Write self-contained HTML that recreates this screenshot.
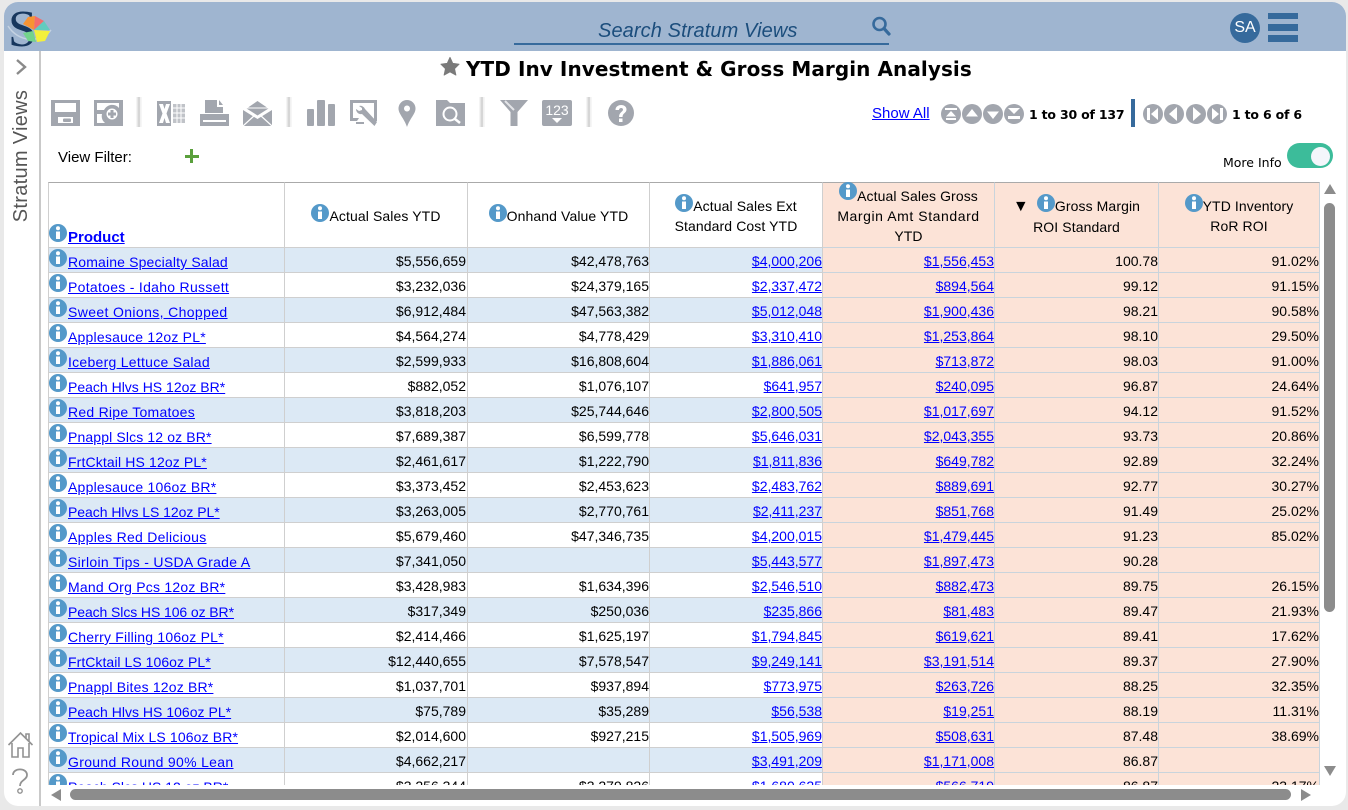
<!DOCTYPE html>
<html><head><meta charset="utf-8"><title>YTD Inv Investment &amp; Gross Margin Analysis</title>
<style>
*{box-sizing:border-box}
html,body{margin:0;padding:0;width:1348px;height:810px;overflow:hidden;background:#e9e9e9;font-family:"Liberation Sans",sans-serif;color:#000}
.abs,#wrap,#top,#side,#tw{position:absolute}
#wrap{left:4px;top:2px;width:1342px;height:804px;background:#fff;border-radius:14px;overflow:hidden}
#top{left:4px;top:2px;width:1342px;height:49px;background:#9fb5d0;border-radius:14px 14px 0 0}
#side{left:39px;top:51px;width:2px;height:755px;background:#c9c9c9}
a{color:#00f;text-decoration:underline}
#tw{left:48px;top:182px;width:1272px;height:603px;overflow:hidden}
table{border-collapse:separate;border-spacing:0;table-layout:fixed;width:1272px}
td{padding:0;height:25px;font-size:14px;line-height:24px;text-align:right;padding-right:1px;border-right:1px solid #cfcfcf;border-bottom:1px solid #cfcfcf;vertical-align:top;white-space:nowrap;position:relative}
td:nth-child(n+3){padding-right:0}
td span,td>a{position:relative;top:1px}
tr.b td{background:#dce9f5}
td:nth-child(n+5),tr.b td:nth-child(n+5){background:#fce3d7;border-right-color:#c9d4dc;border-bottom-color:#c9d4dc}
td:first-child{text-align:left;border-left:1px solid #cfcfcf;padding-left:19px;font-size:14px}
td:first-child a{top:2px}
td svg{position:absolute;left:0;top:1px;width:18px;height:18px}
th{padding:0;height:66px;font-weight:normal;font-size:14px;line-height:20px;text-align:center;border-top:1px solid #aaa;border-right:1px solid #cfcfcf;border-bottom:1px solid #cfcfcf;vertical-align:middle;position:relative;letter-spacing:.1px}
th:first-child{border-left:1px solid #cfcfcf;text-align:left;vertical-align:bottom}
th:nth-child(n+5){background:#fce3d7;border-right-color:#c9d4dc;border-bottom-color:#c9d4dc}
th svg{width:18px;height:18px;vertical-align:-1px}
th div{position:relative;top:0}
.tool svg{position:absolute;fill:#a2a6ae}
.sep{position:absolute;top:97px;width:6px;height:30px;background:linear-gradient(90deg,#f6f6f6 0,#f0f0f0 25%,#d6d6d6 30%,#d6d6d6 65%,#f0f0f0 70%,#f8f8f8 100%)}
.nav{position:absolute;top:104px;width:20px;height:20px}
.b13{position:absolute;font:bold 12.5px "DejaVu Sans",sans-serif;letter-spacing:-.2px;white-space:nowrap;top:107px}
</style></head><body>
<svg width="0" height="0" style="position:absolute"><defs>
<symbol id="i" viewBox="0 0 18 18"><circle cx="9" cy="9" r="9" fill="#5499c9"/><circle cx="9" cy="4.3" r="2" fill="#fff"/><rect x="7" y="7.5" width="4" height="7.5" fill="#fff"/></symbol>
</defs></svg>
<div id="wrap"></div>
<div id="top"></div>
<div id="side"></div>

<!-- logo -->
<svg class="abs" style="left:6px;top:4px" width="48" height="46" viewBox="0 0 48 46">
<text x="2" y="42" font-family="Liberation Serif" font-size="52" fill="#17375e">S</text>
<path d="M2 22C12 38 34 40 45 26" fill="none" stroke="#c4d2e2" stroke-width="1.500"/>
<path d="M28 26L17 20L22 13L29 12Z" fill="#f79433"/><path d="M28 26L29 12L38 17Z" fill="#f46c6c"/><path d="M28 26L38 17L44 26Z" fill="#62cbbf"/><path d="M28 26L44 27L39 37L31 38Z" fill="#f4f03c"/><path d="M27 27L30 38L22 37L17 29Z" fill="#73d38c"/>
</svg>

<!-- search -->
<div class="abs" style="left:598px;top:19px;font-size:20px;font-style:italic;color:#1b4d7c;white-space:nowrap;line-height:24px;letter-spacing:.1px">Search Stratum Views</div>
<div class="abs" style="left:514px;top:43px;width:375px;height:2px;background:#366a9c"></div>
<svg class="abs" style="left:871px;top:15px" width="20" height="22" viewBox="0 0 20 22"><circle cx="8.5" cy="9" r="6" fill="none" stroke="#366a9c" stroke-width="2.6"/><path d="M13 13.5L18 19" stroke="#366a9c" stroke-width="3.2" stroke-linecap="round"/></svg>
<div class="abs" style="left:1230px;top:13px;width:30px;height:30px;border-radius:50%;background:#366a9c;color:#fff;font-size:16px;text-align:center;line-height:30px">SA</div>
<div class="abs" style="left:1268px;top:13px;width:30px;height:6px;background:#366a9c"></div>
<div class="abs" style="left:1268px;top:24px;width:30px;height:7px;background:#366a9c"></div>
<div class="abs" style="left:1268px;top:35px;width:30px;height:7px;background:#366a9c"></div>

<!-- sidebar -->
<svg class="abs" style="left:14px;top:58px" width="14" height="18" viewBox="0 0 14 18"><path d="M3 2L11 9L3 16" fill="none" stroke="#8a8a8a" stroke-width="2.4"/></svg>
<div class="abs" style="left:21px;top:156px;transform:translate(-50%,-50%) rotate(-90deg);font-size:20px;color:#555;white-space:nowrap;line-height:24px;letter-spacing:.3px">Stratum Views</div>
<svg class="abs" style="left:7px;top:731px" width="27" height="28" viewBox="0 0 27 28"><path d="M1.5 14L13.5 2L25.500 14M5 12V26H11V17H16V26H22V12M19 7V3H22V10" fill="none" stroke="#929292" stroke-width="1.6"/></svg>
<svg class="abs" style="left:10px;top:768px" width="20" height="26" viewBox="0 0 20 26"><path d="M3 7C3 -0.500 17 -0.500 17 7C17 12 10 12 10 18" fill="none" stroke="#929292" stroke-width="1.800"/><circle cx="10" cy="23" r="2.200" fill="none" stroke="#929292" stroke-width="1.400"/></svg>

<!-- title -->
<svg class="abs" style="left:440px;top:56px" width="20" height="20" viewBox="0 0 22 21"><path d="M11 1L14 7.500L21 8.500L16 13.500L17.500 20.500L11 17L4.500 20.500L6 13.500L1 8.500L8 7.500Z" fill="#7a7a7a" stroke="#7a7a7a" stroke-linejoin="round"/></svg>
<div class="abs" style="left:466px;top:56px;font:bold 20px/26px 'DejaVu Sans',sans-serif;letter-spacing:.07px;white-space:nowrap">YTD Inv Investment &amp; Gross Margin Analysis</div>

<!-- toolbar -->
<div class="tool">
<svg style="left:51px;top:100px" width="29" height="26" viewBox="0 0 29 26"><path fill-rule="evenodd" d="M0 0H29V26H0ZM4 3V12H25V3ZM7 17V23H22V17Z"/><rect x="12" y="18.500" width="8" height="3.500" rx="1"/></svg>
<svg style="left:94px;top:100px" width="29" height="26" viewBox="0 0 29 26"><path fill-rule="evenodd" d="M0 0H29V26H0ZM3 3V10H10A9 9 0 0 1 25 8V3ZM3 14V23H11A9 9 0 0 1 8 14Z"/><circle cx="18" cy="14" r="6.500" fill="#fff" stroke="#a2a6ae" stroke-width="2"/><path d="M16.500 10H19.500V12.500H22V15.500H19.500V18H16.500V15.500H14V12.500H16.500Z"/></svg>
<div class="sep" style="left:136px"></div>
<svg style="left:157px;top:101px" width="28" height="25" viewBox="0 0 28 25"><path d="M0 0H14V25H0Z" fill="#a2a6ae"/><path d="M16 3H28V22H16Z" fill="#c0c3c8"/><path d="M2 3H6L7.500 8L9 3H13L9.500 12.500L13 22H9L7.500 17L6 22H2L5.500 12.500Z" fill="#fff"/><path d="M16 7H28M16 12H28M16 17H28M20 3V22M24 3V22" stroke="#fff" stroke-width="1"/></svg>
<svg style="left:200px;top:100px" width="29" height="26" viewBox="0 0 29 26"><path d="M5 0H17V7H23V13H5ZM19 0L23 5H19ZM0 14H29V26H0Z"/><rect x="3" y="20" width="23" height="2" fill="#fff"/></svg>
<svg style="left:243px;top:101px" width="29" height="25" viewBox="0 0 29 25"><path d="M14.500 0L24 6.500H5ZM0 9L14.500 18L29 9V25H0Z"/><path d="M3.500 7.500H25.500L14.500 14.500Z"/><path d="M0 25L12 14M29 25L17 14" stroke="#fff" stroke-width="1.200"/><path d="M2 8L14.500 16L27 8" stroke="#fff" stroke-width="1.500" fill="none"/></svg>
<div class="sep" style="left:286px"></div>
<svg style="left:307px;top:100px" width="28" height="26" viewBox="0 0 28 26"><rect x="0" y="9" width="7" height="17" rx="1"/><rect x="10" y="0" width="8" height="26" rx="1"/><rect x="21" y="4" width="7" height="22" rx="1"/></svg>
<svg style="left:350px;top:100px" width="28" height="27" viewBox="0 0 28 27"><path fill-rule="evenodd" d="M0 0H27V21H21L19 19H24V3H3V18H9L7 21H0Z"/><path d="M9 6A5 5 0 0 1 15 9L27 22L24.500 26L12 14A5 5 0 0 1 6 9L9 11L12 10L12 8Z"/><path d="M6 22H14V24H6Z"/></svg>
<svg style="left:398px;top:100px" width="18" height="27" viewBox="0 0 18 27"><path fill-rule="evenodd" d="M9 0A8.500 8.500 0 0 1 17.500 8.500C17.500 14 12 18 9 27C6 18 .5 14 .5 8.500A8.500 8.500 0 0 1 9 0ZM9 5.500A3 3 0 1 0 9.010 5.500Z"/></svg>
<svg style="left:436px;top:100px" width="29" height="26" viewBox="0 0 29 26"><path d="M0 0H11L14 3H29V26H0Z"/><circle cx="14" cy="14" r="6.500" fill="none" stroke="#fff" stroke-width="2"/><path d="M19 19L24 23" stroke="#fff" stroke-width="2.500"/></svg>
<div class="sep" style="left:479px"></div>
<svg style="left:500px;top:100px" width="28" height="26" viewBox="0 0 28 26"><path d="M0 0H28L17.500 12V26H10.500V12Z"/><path d="M5 1L14 10" stroke="#e4e5e8" stroke-width="2"/></svg>
<svg style="left:542px;top:100px" width="30" height="26" viewBox="0 0 30 26"><rect width="30" height="26" rx="2"/><text x="15" y="15" text-anchor="middle" font-family="Liberation Sans" font-size="14" fill="#fff">123</text><path d="M10 18H20L15 23Z" fill="#fff"/></svg>
<div class="sep" style="left:586px"></div>
<svg style="left:607px;top:100px" width="28" height="26" viewBox="0 0 28 26"><circle cx="14" cy="13" r="13"/><path d="M8.500 10C8.500 3.500 19.500 3.500 19.500 9.500C19.500 13 15.500 13 15.500 17H12C12 12 16 12 16 9.500C16 7.500 12 7.500 12 10Z" fill="#fff"/><rect x="12" y="18.500" width="3.500" height="3.500" fill="#fff"/></svg>
</div>

<a class="abs" style="left:872px;top:105px;font-size:15px;line-height:18px;white-space:nowrap">Show All</a>
<svg class="nav" style="left:941px" viewBox="0 0 20 20"><circle cx="10" cy="10" r="10" fill="#a2a6ae"/><path d="M4 4H16V6H4ZM10 7L15 12.500H5ZM5 14H15V16H5Z" fill="#fff"/></svg>
<svg class="nav" style="left:962px" viewBox="0 0 20 20"><circle cx="10" cy="10" r="10" fill="#a2a6ae"/><path d="M10 5L16 12.500H4Z" fill="#fff"/></svg>
<svg class="nav" style="left:983px" viewBox="0 0 20 20"><circle cx="10" cy="10" r="10" fill="#a2a6ae"/><path d="M10 15L16 7.500H4Z" fill="#fff"/></svg>
<svg class="nav" style="left:1004px" viewBox="0 0 20 20"><circle cx="10" cy="10" r="10" fill="#a2a6ae"/><path d="M4 4H16L10 10ZM4 12H16V15H4Z" fill="#fff"/></svg>
<div class="b13" style="left:1029px">1 to 30 of 137</div>
<div class="abs" style="left:1131px;top:99px;width:4px;height:28px;background:#366a9c"></div>
<svg class="nav" style="left:1143px" viewBox="0 0 20 20"><circle cx="10" cy="10" r="10" fill="#a2a6ae"/><path d="M4 4H7V16H4ZM15 4V16L8 10Z" fill="#fff"/></svg>
<svg class="nav" style="left:1164px" viewBox="0 0 20 20"><circle cx="10" cy="10" r="10" fill="#a2a6ae"/><path d="M13 3V17L5 10Z" fill="#fff"/></svg>
<svg class="nav" style="left:1186px" viewBox="0 0 20 20"><circle cx="10" cy="10" r="10" fill="#a2a6ae"/><path d="M7 3V17L15 10Z" fill="#fff"/></svg>
<svg class="nav" style="left:1207px" viewBox="0 0 20 20"><circle cx="10" cy="10" r="10" fill="#a2a6ae"/><path d="M13 4H16V16H13ZM5 4V16L12 10Z" fill="#fff"/></svg>
<div class="b13" style="left:1232px">1 to 6 of 6</div>

<div class="abs" style="left:58px;top:149px;font-size:15px;line-height:18px;white-space:nowrap">View Filter:</div>
<div class="abs" style="left:185px;top:155px;width:14px;height:3px;background:#5aa03c"></div>
<div class="abs" style="left:190px;top:149px;width:3px;height:14px;background:#5aa03c"></div>
<div class="abs" style="left:1223px;top:155px;font:12.500px/16px 'DejaVu Sans',sans-serif;white-space:nowrap">More Info</div>
<div class="abs" style="left:1287px;top:143px;width:46px;height:25px;border-radius:13px;background:#3cbc9a"></div>
<div class="abs" style="left:1311px;top:147px;width:19px;height:19px;border-radius:50%;background:#f4f6fb"></div>

<div id="tw"><table>
<colgroup><col style="width:237px"><col style="width:183px"><col style="width:182px"><col style="width:173px"><col style="width:172px"><col style="width:164px"><col style="width:161px"></colgroup>
<thead><tr>
<th><svg style="vertical-align:-1px"><use href="#i"/></svg><a style="font-size:15px;position:relative;top:1px;left:1px;letter-spacing:0"><b>Product</b></a></th>
<th><div><svg><use href="#i"/></svg>Actual Sales YTD</div></th>
<th><div><svg><use href="#i"/></svg>Onhand Value YTD</div></th>
<th><div><svg><use href="#i"/></svg>Actual Sales Ext<br>Standard Cost YTD</div></th>
<th><div style="top:-1px"><svg style="vertical-align:1px"><use href="#i"/></svg>Actual Sales Gross<br><span style="letter-spacing:.57px">Margin Amt Standard</span><br>YTD</div></th>
<th><div style="left:0;top:0"><span style="font-size:16px;margin-right:8px">&#9660;</span><svg><use href="#i"/></svg>Gross Margin<br>ROI Standard</div></th>
<th><div><svg><use href="#i"/></svg>YTD Inventory<br>RoR ROI</div></th>
</tr></thead>
<tbody>
<tr class="b"><td><svg><use href="#i"/></svg><a style="letter-spacing:.15px">Romaine Specialty Salad</a></td><td><span>$5,556,659</span></td><td><span>$42,478,763</span></td><td><a>$4,000,206</a></td><td><a>$1,556,453</a></td><td><span>100.78</span></td><td><span>91.02%</span></td></tr>
<tr><td><svg><use href="#i"/></svg><a style="letter-spacing:.29px">Potatoes - Idaho Russett</a></td><td><span>$3,232,036</span></td><td><span>$24,379,165</span></td><td><a>$2,337,472</a></td><td><a>$894,564</a></td><td><span>99.12</span></td><td><span>91.15%</span></td></tr>
<tr class="b"><td><svg><use href="#i"/></svg><a style="letter-spacing:.37px">Sweet Onions, Chopped</a></td><td><span>$6,912,484</span></td><td><span>$47,563,382</span></td><td><a>$5,012,048</a></td><td><a>$1,900,436</a></td><td><span>98.21</span></td><td><span>90.58%</span></td></tr>
<tr><td><svg><use href="#i"/></svg><a style="letter-spacing:.21px">Applesauce 12oz PL*</a></td><td><span>$4,564,274</span></td><td><span>$4,778,429</span></td><td><a>$3,310,410</a></td><td><a>$1,253,864</a></td><td><span>98.10</span></td><td><span>29.50%</span></td></tr>
<tr class="b"><td><svg><use href="#i"/></svg><a style="letter-spacing:.27px">Iceberg Lettuce Salad</a></td><td><span>$2,599,933</span></td><td><span>$16,808,604</span></td><td><a>$1,886,061</a></td><td><a>$713,872</a></td><td><span>98.03</span></td><td><span>91.00%</span></td></tr>
<tr><td><svg><use href="#i"/></svg><a style="letter-spacing:0">Peach Hlvs HS 12oz BR*</a></td><td><span>$882,052</span></td><td><span>$1,076,107</span></td><td><a>$641,957</a></td><td><a>$240,095</a></td><td><span>96.87</span></td><td><span>24.64%</span></td></tr>
<tr class="b"><td><svg><use href="#i"/></svg><a style="letter-spacing:.25px">Red Ripe Tomatoes</a></td><td><span>$3,818,203</span></td><td><span>$25,744,646</span></td><td><a>$2,800,505</a></td><td><a>$1,017,697</a></td><td><span>94.12</span></td><td><span>91.52%</span></td></tr>
<tr><td><svg><use href="#i"/></svg><a style="letter-spacing:.13px">Pnappl Slcs 12 oz BR*</a></td><td><span>$7,689,387</span></td><td><span>$6,599,778</span></td><td><a>$5,646,031</a></td><td><a>$2,043,355</a></td><td><span>93.73</span></td><td><span>20.86%</span></td></tr>
<tr class="b"><td><svg><use href="#i"/></svg><a style="letter-spacing:.13px">FrtCktail HS 12oz PL*</a></td><td><span>$2,461,617</span></td><td><span>$1,222,790</span></td><td><a>$1,811,836</a></td><td><a>$649,782</a></td><td><span>92.89</span></td><td><span>32.24%</span></td></tr>
<tr><td><svg><use href="#i"/></svg><a style="letter-spacing:.22px">Applesauce 106oz BR*</a></td><td><span>$3,373,452</span></td><td><span>$2,453,623</span></td><td><a>$2,483,762</a></td><td><a>$889,691</a></td><td><span>92.77</span></td><td><span>30.27%</span></td></tr>
<tr class="b"><td><svg><use href="#i"/></svg><a style="letter-spacing:-.04px">Peach Hlvs LS 12oz PL*</a></td><td><span>$3,263,005</span></td><td><span>$2,770,761</span></td><td><a>$2,411,237</a></td><td><a>$851,768</a></td><td><span>91.49</span></td><td><span>25.02%</span></td></tr>
<tr><td><svg><use href="#i"/></svg><a style="letter-spacing:.27px">Apples Red Delicious</a></td><td><span>$5,679,460</span></td><td><span>$47,346,735</span></td><td><a>$4,200,015</a></td><td><a>$1,479,445</a></td><td><span>91.23</span></td><td><span>85.02%</span></td></tr>
<tr class="b"><td><svg><use href="#i"/></svg><a style="letter-spacing:.3px">Sirloin Tips - USDA Grade A</a></td><td><span>$7,341,050</span></td><td></td><td><a>$5,443,577</a></td><td><a>$1,897,473</a></td><td><span>90.28</span></td><td></td></tr>
<tr><td><svg><use href="#i"/></svg><a style="letter-spacing:.23px">Mand Org Pcs 12oz BR*</a></td><td><span>$3,428,983</span></td><td><span>$1,634,396</span></td><td><a>$2,546,510</a></td><td><a>$882,473</a></td><td><span>89.75</span></td><td><span>26.15%</span></td></tr>
<tr class="b"><td><svg><use href="#i"/></svg><a style="letter-spacing:-.09px">Peach Slcs HS 106 oz BR*</a></td><td><span>$317,349</span></td><td><span>$250,036</span></td><td><a>$235,866</a></td><td><a>$81,483</a></td><td><span>89.47</span></td><td><span>21.93%</span></td></tr>
<tr><td><svg><use href="#i"/></svg><a style="letter-spacing:.2px">Cherry Filling 106oz PL*</a></td><td><span>$2,414,466</span></td><td><span>$1,625,197</span></td><td><a>$1,794,845</a></td><td><a>$619,621</a></td><td><span>89.41</span></td><td><span>17.62%</span></td></tr>
<tr class="b"><td><svg><use href="#i"/></svg><a style="letter-spacing:.05px">FrtCktail LS 106oz PL*</a></td><td><span>$12,440,655</span></td><td><span>$7,578,547</span></td><td><a>$9,249,141</a></td><td><a>$3,191,514</a></td><td><span>89.37</span></td><td><span>27.90%</span></td></tr>
<tr><td><svg><use href="#i"/></svg><a style="letter-spacing:.18px">Pnappl Bites 12oz BR*</a></td><td><span>$1,037,701</span></td><td><span>$937,894</span></td><td><a>$773,975</a></td><td><a>$263,726</a></td><td><span>88.25</span></td><td><span>32.35%</span></td></tr>
<tr class="b"><td><svg><use href="#i"/></svg><a style="letter-spacing:.02px">Peach Hlvs HS 106oz PL*</a></td><td><span>$75,789</span></td><td><span>$35,289</span></td><td><a>$56,538</a></td><td><a>$19,251</a></td><td><span>88.19</span></td><td><span>11.31%</span></td></tr>
<tr><td><svg><use href="#i"/></svg><a style="letter-spacing:.13px">Tropical Mix LS 106oz BR*</a></td><td><span>$2,014,600</span></td><td><span>$927,215</span></td><td><a>$1,505,969</a></td><td><a>$508,631</a></td><td><span>87.48</span></td><td><span>38.69%</span></td></tr>
<tr class="b"><td><svg><use href="#i"/></svg><a style="letter-spacing:.32px">Ground Round 90% Lean</a></td><td><span>$4,662,217</span></td><td></td><td><a>$3,491,209</a></td><td><a>$1,171,008</a></td><td><span>86.87</span></td><td></td></tr>
<tr><td><svg><use href="#i"/></svg><a style="letter-spacing:0">Peach Slcs HS 12 oz BR*</a></td><td><span>$3,256,344</span></td><td><span>$3,279,826</span></td><td><a>$1,680,625</a></td><td><a>$566,719</a></td><td><span>86.87</span></td><td><span>23.17%</span></td></tr>
</tbody></table></div>

<!-- scrollbars -->
<div class="abs" style="left:1324px;top:203px;width:11px;height:409px;border-radius:6px;background:#8c8c8c"></div>
<div class="abs" style="left:70px;top:789px;width:1221px;height:11px;border-radius:6px;background:#8c8c8c"></div>
<svg class="abs" style="left:1322px;top:183px" width="16" height="12" viewBox="0 0 16 12"><path d="M8 1L14 11H2Z" fill="#8c8c8c"/></svg>
<svg class="abs" style="left:1322px;top:765px" width="16" height="12" viewBox="0 0 16 12"><path d="M8 11L14 1H2Z" fill="#8c8c8c"/></svg>
<svg class="abs" style="left:50px;top:788px" width="12" height="14" viewBox="0 0 12 14"><path d="M1 7L11 1V13Z" fill="#8c8c8c"/></svg>
<svg class="abs" style="left:1300px;top:788px" width="12" height="14" viewBox="0 0 12 14"><path d="M11 7L1 1V13Z" fill="#8c8c8c"/></svg>
</body></html>
